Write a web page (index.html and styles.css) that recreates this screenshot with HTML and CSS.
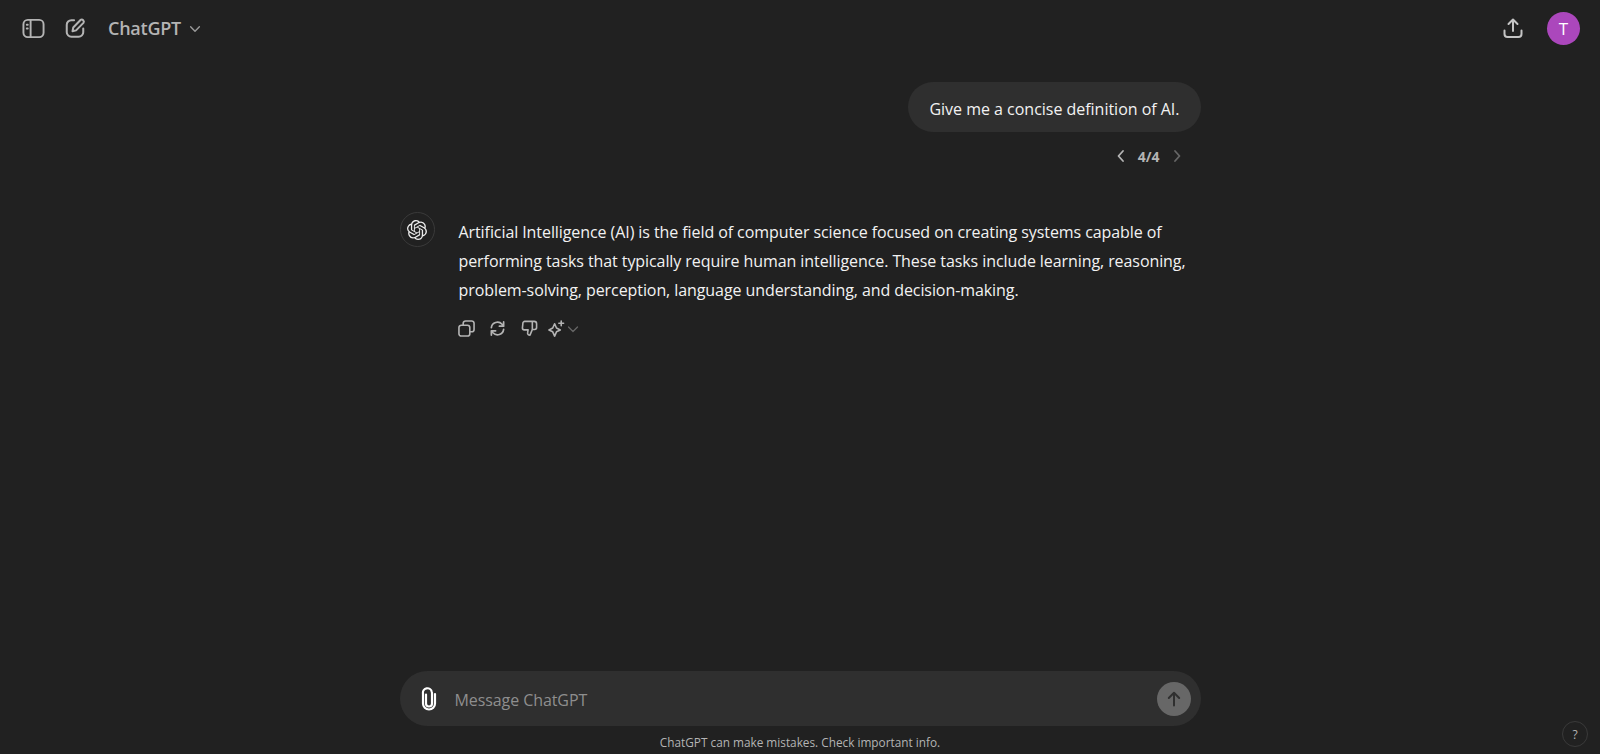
FILE: index.html
```html
<!DOCTYPE html>
<html lang="en">
<head>
<meta charset="utf-8">
<title>ChatGPT</title>
<link rel="stylesheet" href="styles.css">
</head>
<body>
<header class="topbar">
  <div class="top-group">
    <svg class="icon-side" viewBox="0 0 24 24" fill="none" stroke="#b4b4b4" stroke-width="2"><rect x="1.500" y="3" width="21" height="18" rx="4.500"/><path d="M9 3v18"/><path d="M5 8h1M5 12h1" stroke-linecap="round"/></svg>
    <svg class="edit" viewBox="0 0 24 24" fill="none" stroke="#b4b4b4" stroke-width="2.200" stroke-linecap="round" stroke-linejoin="round"><path d="M11 3.500H8a5 5 0 0 0-5 5v8a5 5 0 0 0 5 5h8a5 5 0 0 0 5-5v-4"/><path d="M18 3.200a2.300 2.300 0 0 1 3.200 3.200l-8 8.200-3.900.9.800-4z"/></svg>
    <div class="model">ChatGPT
      <svg class="chev" viewBox="0 0 16 16" fill="none" stroke="#9b9b9b" stroke-width="1.600" stroke-linecap="round" stroke-linejoin="round"><path d="M3 5.500l5 5 5-5"/></svg>
    </div>
  </div>
  <div class="top-group right">
    <svg class="icon-24" viewBox="0 0 24 24" fill="none" stroke="#c4c4c4" stroke-width="2" stroke-linecap="round" stroke-linejoin="round"><path d="M12 15V3.500M7.500 8 12 3.500 16.500 8"/><path d="M3.500 14.500V18a3 3 0 0 0 3 3h11a3 3 0 0 0 3-3v-3.500"/></svg>
    <div class="avatar">T</div>
  </div>
</header>

<main class="thread">
  <div class="user-turn">
    <div class="bubble">Give me a concise definition of AI.</div>
    <div class="pager">
      <svg class="pg" viewBox="0 0 16 16" fill="none" stroke="#b4b4b4" stroke-width="1.800" stroke-linecap="round" stroke-linejoin="round"><path d="M10 3 5.500 8l4.500 5"/></svg>
      <span>4/4</span>
      <svg class="pg" viewBox="0 0 16 16" fill="none" stroke="#666" stroke-width="1.800" stroke-linecap="round" stroke-linejoin="round"><path d="M6 3l4.500 5L6 13"/></svg>
    </div>
  </div>

  <div class="assistant-turn">
    <div class="bot-avatar">
      <svg viewBox="0 0 24 24" fill="#ececec"><path d="M22.2819 9.8211a5.9847 5.9847 0 0 0-.5157-4.9108 6.0462 6.0462 0 0 0-6.5098-2.9A6.0651 6.0651 0 0 0 4.9807 4.1818a5.9847 5.9847 0 0 0-3.9977 2.9 6.0462 6.0462 0 0 0 .7427 7.0966 5.98 5.98 0 0 0 .511 4.9107 6.051 6.051 0 0 0 6.5146 2.9001A5.9847 5.9847 0 0 0 13.2599 24a6.0557 6.0557 0 0 0 5.7718-4.2058 5.9894 5.9894 0 0 0 3.9977-2.9001 6.0557 6.0557 0 0 0-.7475-7.0729zm-9.022 12.6081a4.4755 4.4755 0 0 1-2.8764-1.0408l.1419-.0804 4.7783-2.7582a.7948.7948 0 0 0 .3927-.6813v-6.7369l2.02 1.1686a.071.071 0 0 1 .038.052v5.5826a4.504 4.504 0 0 1-4.4945 4.4944zm-9.6607-4.1254a4.4708 4.4708 0 0 1-.5346-3.0137l.142.0852 4.783 2.7582a.7712.7712 0 0 0 .7806 0l5.8428-3.3685v2.3324a.0804.0804 0 0 1-.0332.0615L9.74 19.9502a4.4992 4.4992 0 0 1-6.1408-1.6464zM2.3408 7.8956a4.485 4.485 0 0 1 2.3655-1.9728V11.6a.7664.7664 0 0 0 .3879.6765l5.8144 3.3543-2.0201 1.1685a.0757.0757 0 0 1-.071 0l-4.8303-2.7865A4.504 4.504 0 0 1 2.3408 7.872zm16.5963 3.8558L13.1038 8.364 15.1192 7.2a.0757.0757 0 0 1 .071 0l4.8303 2.7913a4.4944 4.4944 0 0 1-.6765 8.1042v-5.6772a.79.79 0 0 0-.407-.667zm2.0107-3.0231l-.142-.0852-4.7735-2.7818a.7759.7759 0 0 0-.7854 0L9.409 9.2297V6.8974a.0662.0662 0 0 1 .0284-.0615l4.8303-2.7866a4.4992 4.4992 0 0 1 6.6802 4.66zM8.3065 12.863l-2.02-1.1638a.0804.0804 0 0 1-.038-.0567V6.0742a4.4992 4.4992 0 0 1 7.3757-3.4537l-.142.0805L8.704 5.459a.7948.7948 0 0 0-.3927.6813zm1.0976-2.3654l2.602-1.4998 2.6069 1.4998v2.9994l-2.5974 1.4997-2.6067-1.4997Z"/></svg>
    </div>
    <div class="answer">
      <p class="answer-text">Artificial Intelligence (AI) is the field of computer science focused on creating systems capable of performing tasks that typically require human intelligence. These tasks include learning, reasoning, problem-solving, perception, language understanding, and decision-making.</p>
      <div class="actions">
        <svg class="act" viewBox="0 0 18 18" fill="none" stroke="#b4b4b4" stroke-width="1.700" stroke-linejoin="round"><rect x="1" y="5.500" width="11.500" height="11.500" rx="2.500"/><path d="M5.500 5.500V3.500A2.500 2.500 0 0 1 8 1h6.500A2.500 2.500 0 0 1 17 3.500V10a2.500 2.500 0 0 1-2.500 2.500h-2"/></svg>
        <svg class="act" viewBox="0 0 18 18" fill="none" stroke="#b4b4b4" stroke-width="1.800" stroke-linecap="round" stroke-linejoin="round"><path d="M2.500 8a6.500 6.500 0 0 1 11.300-3.500L15.500 6.500M15.500 2v4.500H11"/><path d="M15.500 10a6.500 6.500 0 0 1-11.300 3.500L2.500 11.500M2.500 16v-4.500H7"/></svg>
        <svg class="act" viewBox="0 0 18 18" fill="none" stroke="#b4b4b4" stroke-width="1.700" stroke-linejoin="round"><path d="M4 1.500h10a2.500 2.500 0 0 1 2.500 2.500v4a2 2 0 0 1-2 2h-2.500l-2.500 6c-1.800 0-2.800-1-2.500-2.500l.5-3H3.500A2 2 0 0 1 1.500 8.500L2 3.500a2 2 0 0 1 2-2z"/><path d="M12 1.500V10"/></svg>
        <div class="spark">
          <svg class="act" viewBox="0 0 18 18" fill="none" stroke="#b4b4b4" stroke-width="1.700" stroke-linejoin="round"><path d="M7 4 9 8.500 13 10.500 9 12.500 7 17 5 12.500 1 10.500 5 8.500z"/><path d="M14 1v5M11.500 3.500h5" stroke-linecap="round"/></svg>
          <svg class="act-chev" viewBox="0 0 12 12" fill="none" stroke="#666" stroke-width="1.300" stroke-linecap="round" stroke-linejoin="round"><path d="M1.500 4 6 8.500 10.500 4"/></svg>
        </div>
      </div>
    </div>
  </div>
</main>

<section class="composer-wrap">
  <div class="composer">
    <svg class="clip" viewBox="0 0 24 24" fill="none" stroke="#fff" stroke-width="2.200" stroke-linecap="round"><path d="M9 7.500v9a3 3 0 0 0 6 0V6a4 4 0 0 0-.2-1A4.300 4.300 0 0 0 6 6.500V16.500a6 6 0 0 0 12 0V7"/></svg>
    <span class="placeholder">Message ChatGPT</span>
    <div class="send">
      <svg viewBox="0 0 20 20" fill="none" stroke="#2f2f2f" stroke-width="2" stroke-linecap="round" stroke-linejoin="round"><path d="M10 16.500V4M4.800 9 10 3.800 15.200 9"/></svg>
    </div>
  </div>
  <p class="disclaimer">ChatGPT can make mistakes. Check important info.</p>
</section>

<div class="help">?</div>
</body>
</html>
```

FILE: styles.css
```css
* { box-sizing: border-box; }
html, body { height: 100%; }
body {
  margin: 0;
  height: 754px;
  overflow: hidden;
  background: #212121;
  color: #f2f2f2;
  font-family: "Open Sans", "Noto Sans", "Liberation Sans", sans-serif;
  display: flex;
  flex-direction: column;
  position: relative;
}
.topbar {
  height: 56px;
  flex: none;
  display: flex;
  align-items: center;
  justify-content: space-between;
  padding: 0 20px 0 22px;
}
.top-group { display: flex; align-items: center; }
.top-group.right { gap: 22px; }
.icon-24 { width: 24px; height: 24px; display: block; }
.icon-side { width: 23px; height: 23px; display: block; }
.edit { width: 22px; height: 22px; display: block; margin-left: 19px; }
.model {
  margin-left: 22px;
  display: flex;
  align-items: center;
  gap: 7px;
  font-size: 18px;
  font-weight: 600;
  letter-spacing: -0.25px;
  color: #b4b4b4;
}
.chev { width: 14px; height: 14px; margin-top: 1px; }
.avatar {
  width: 33px;
  height: 33px;
  border-radius: 50%;
  background: #ab47bc;
  color: #fff;
  font-size: 17px;
  display: flex;
  align-items: center;
  justify-content: center;
}
.thread {
  flex: 1;
  width: 801px;
  margin: 0 auto;
  display: flex;
  flex-direction: column;
  padding-top: 26px;
}
.user-turn { display: flex; flex-direction: column; align-items: flex-end; }
.bubble {
  background: #2f2f2f;
  border-radius: 25px;
  height: 50px;
  display: flex;
  align-items: center;
  padding: 3px 21px 0;
  font-size: 16px;
  letter-spacing: -0.02px;
}
.pager {
  margin-top: 14px;
  padding-right: 16px;
  display: flex;
  align-items: center;
  gap: 9px;
  font-size: 14px;
  font-weight: 700;
  color: #b4b4b4;
  height: 20px;
}
.pg { width: 16px; height: 16px; }
.assistant-turn {
  margin-top: 46px;
  display: flex;
  gap: 24px;
}
.bot-avatar {
  width: 35px;
  height: 35px;
  flex: none;
  border-radius: 50%;
  border: 1px solid #3a3a3a;
  display: flex;
  align-items: center;
  justify-content: center;
}
.bot-avatar svg { width: 20px; height: 20px; }
.answer { width: 732px; }
.answer-text {
  margin: 6px 0 0;
  font-size: 16px;
  line-height: 29px;
  letter-spacing: -0.08px;
}
.actions {
  margin: 15px 0 0 -1px;
  display: flex;
  align-items: center;
  gap: 14.500px;
}
.act { width: 17px; height: 17px; display: block; }
.spark { display: flex; align-items: center; gap: 2px; margin-left: -4px; }
.act-chev { width: 12px; height: 12px; }
.composer-wrap { flex: none; width: 801px; margin: 0 auto; }
.composer {
  height: 55px;
  border-radius: 28px;
  background: #2f2f2f;
  display: flex;
  align-items: center;
  padding: 0 10px 0 17px;
}
.clip { width: 24px; height: 24px; flex: none; }
.placeholder {
  margin-left: 14px;
  padding-top: 3px;
  flex: 1;
  font-size: 16px;
  letter-spacing: -0.08px;
  color: #8e8e8e;
}
.send {
  width: 34px;
  height: 34px;
  border-radius: 50%;
  background: #676767;
  display: flex;
  align-items: center;
  justify-content: center;
}
.send svg { width: 20px; height: 20px; }
.disclaimer {
  margin: 8px 0 0;
  height: 20px;
  text-align: center;
  font-size: 11.800px;
  line-height: 16px;
  color: #b4b4b4;
}
.help {
  position: absolute;
  right: 12px;
  bottom: 7px;
  width: 26px;
  height: 26px;
  border-radius: 50%;
  border: 1px solid #3a3a3a;
  display: flex;
  align-items: center;
  justify-content: center;
  font-size: 12px;
  color: #b4b4b4;
}
```
